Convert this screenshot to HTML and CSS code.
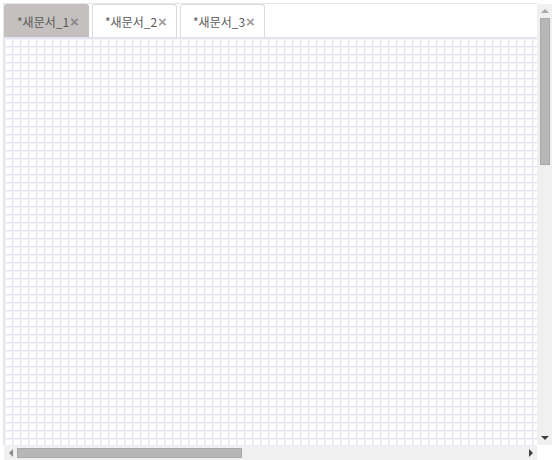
FILE: index.html
```html
<!DOCTYPE html>
<html lang="ko">
<head>
<meta charset="utf-8">
<link rel="stylesheet" href="styles.css">
</head>
<body>
<div class="app">
  <div class="left">
    <div class="main">
      <div class="tabs">
        <div class="tab active"><span class="name">*새문서_1</span><span class="close">×</span></div>
        <div class="tab"><span class="name">*새문서_2</span><span class="close">×</span></div>
        <div class="tab"><span class="name">*새문서_3</span><span class="close">×</span></div>
      </div>
      <div class="canvas"></div>
    </div>
    <div class="hscroll">
      <div class="btn"><span class="arr-left"></span></div>
      <div class="hthumb"></div>
      <div class="spacer"></div>
      <div class="btn"><span class="arr-right"></span></div>
    </div>
  </div>
  <div class="right">
    <div class="vscroll">
      <div class="vbtn"><span class="arr-up"></span></div>
      <div class="vthumb"></div>
      <div class="spacer"></div>
      <div class="vbtn"><span class="arr-down"></span></div>
    </div>
    <div class="corner"></div>
  </div>
</div>
</body>
</html>
```
FILE: styles.css
```css
html, body {
  margin: 0;
  padding: 0;
  background: #fff;
}
body {
  width: 552px;
  height: 460px;
  overflow: hidden;
  font-family: "Noto Sans CJK KR", "Noto Sans", sans-serif;
}
.app {
  display: flex;
  width: 552px;
  height: 460px;
}
.left {
  width: 537px;
  display: flex;
  flex-direction: column;
}
.main {
  height: 441px;
  margin-left: 3px;
  margin-top: 3px;
  border-top: 1px solid #e6e6e6;
  border-left: 1px solid #e6e6e6;
  display: flex;
  flex-direction: column;
}
.tabs {
  height: 33px;
  display: flex;
  gap: 3px;
  border-bottom: 1px solid #e2e0ea;
  flex-shrink: 0;
}
.tab {
  width: 85px;
  box-sizing: border-box;
  border: 1px solid #dcdcdc;
  border-bottom: none;
  border-radius: 3px 3px 0 0;
  background: #fff;
  display: flex;
  align-items: center;
  padding-left: 12px;
  font-size: 12px;
  color: #5a5a5a;
}
.tab.active {
  background: #c4c0bf;
  border-color: #c4c0bf;
}
.tab .close {
  font-size: 15px;
  line-height: 1;
  color: #a0a0a0;
  margin-left: 1px;
  font-weight: bold;
  font-family: "Liberation Sans", sans-serif;
}
.tab.active .close {
  color: #8c8887;
}
.canvas {
  flex: 1;
  background-color: #fff;
  background-image:
    linear-gradient(to right, #e7e4f4 1px, #f4f3fb 1px, #f4f3fb 2px, transparent 2px),
    linear-gradient(to bottom, #e7e4f4 1px, #f4f3fb 1px, #f4f3fb 2px, transparent 2px);
  background-size: 8px 8px;
  background-position: 0 0;
}
.hscroll {
  height: 15px;
  margin-left: 4px;
  background: #f0f0f0;
  display: flex;
  align-items: center;
}
.btn {
  width: 13px;
  height: 15px;
  display: flex;
  align-items: center;
  justify-content: center;
}
.hthumb {
  width: 225px;
  height: 10px;
  background: #b7b7b7;
  border: 1px solid #a9a9a9;
  box-sizing: border-box;
}
.spacer {
  flex: 1;
}
.arr-left {
  width: 0; height: 0;
  border-top: 4px solid transparent;
  border-bottom: 4px solid transparent;
  border-right: 4px solid #8a8a8a;
}
.arr-right {
  width: 0; height: 0;
  border-top: 4px solid transparent;
  border-bottom: 4px solid transparent;
  border-left: 4px solid #404040;
}
.right {
  width: 15px;
  display: flex;
  flex-direction: column;
}
.vscroll {
  margin-top: 4px;
  height: 441px;
  background: #f0f0f0;
  display: flex;
  flex-direction: column;
  align-items: center;
}
.vbtn {
  width: 15px;
  height: 14px;
  display: flex;
  align-items: center;
  justify-content: center;
}
.vthumb {
  width: 10px;
  height: 147px;
  background: #b7b7b7;
  border: 1px solid #a9a9a9;
  box-sizing: border-box;
}
.arr-up {
  width: 0; height: 0;
  border-left: 4px solid transparent;
  border-right: 4px solid transparent;
  border-bottom: 4px solid #a8a8a8;
}
.arr-down {
  width: 0; height: 0;
  border-left: 4px solid transparent;
  border-right: 4px solid transparent;
  border-top: 4px solid #404040;
}
.corner {
  height: 15px;
  background: #fff;
}
```
